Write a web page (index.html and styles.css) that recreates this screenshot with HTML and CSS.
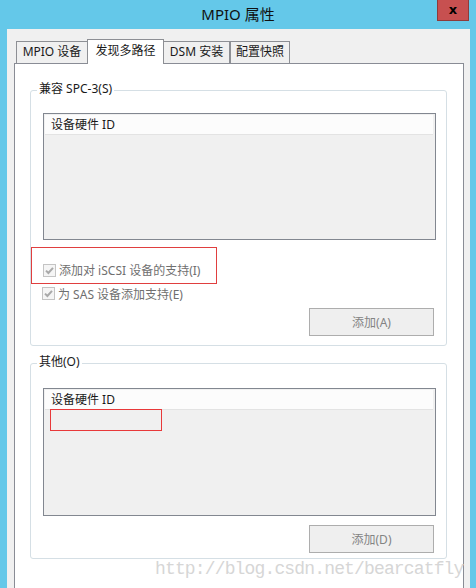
FILE: index.html
```html
<!DOCTYPE html>
<html lang="zh-CN">
<head>
    <meta charset="UTF-8">
    <meta name="viewport" content="width=device-width, initial-scale=1.0">
    <title>MPIO 属性</title>
    <link rel="stylesheet" href="styles.css">
</head>
<body>
    <div class="titlebar">
        <span></span>
        <div class="title">MPIO 属性</div>
        <div class="close">x</div>
    </div>

    <div class="window">
        <div class="tabs">
            <div class="tab tab-mpio">MPIO 设备</div>
            <div class="tab tab-active">发现多路径</div>
            <div class="tab tab-dsm">DSM 安装</div>
            <div class="tab tab-snap">配置快照</div>
        </div>

        <div class="page">
            <div class="group group-spc">
                <span class="group-title">兼容 SPC-3(S)</span>
                <div class="listbox list-spc">
                    <div class="list-header">设备硬件 ID</div>
                </div>
                <div class="check-row marked">
                    <svg width="13" height="13" viewBox="0 0 13 13"><rect x="0.5" y="0.5" width="12" height="12" fill="#f5f5f5" stroke="#c4c4c4"/><path d="M3 6.6 L5.4 9 L10 3.8" fill="none" stroke="#a9a9a9" stroke-width="2"/></svg>
                    <span>添加对 iSCSI 设备的支持(I)</span>
                </div>
                <div class="check-row plain">
                    <svg width="13" height="13" viewBox="0 0 13 13"><rect x="0.5" y="0.5" width="12" height="12" fill="#f5f5f5" stroke="#c4c4c4"/><path d="M3 6.6 L5.4 9 L10 3.8" fill="none" stroke="#a9a9a9" stroke-width="2"/></svg>
                    <span>为 SAS 设备添加支持(E)</span>
                </div>
                <button class="btn btn-spc">添加(A)</button>
            </div>

            <div class="group group-other">
                <span class="group-title">其他(O)</span>
                <div class="listbox list-other">
                    <div class="list-header">设备硬件 ID</div>
                    <div class="mark-box"></div>
                </div>
                <button class="btn btn-other">添加(D)</button>
            </div>
        </div>
    </div>

    <div class="watermark">http://blog.csdn.net/bearcatfly</div>
</body>
</html>
```

FILE: styles.css
```css
body { margin: 0; width: 476px; height: 588px; overflow: hidden; position: relative; background: #64c8e9; font-family: "Noto Sans", "Noto Sans CJK SC", sans-serif; font-size: 12px; color: #1a1a1a; }

.titlebar { height: 29px; display: grid; grid-template-columns: 1fr auto 1fr; }
.title { line-height: 29px; font-size: 15px; color: #111; }
.close { justify-self: end; align-self: start; width: 30px; height: 20px; margin-right: 7px; background: #c75050; border: 1px solid #8e3b3b; border-top: none; text-align: center; font-family: "DejaVu Sans", sans-serif; font-weight: bold; font-size: 13px; line-height: 19px; color: #000; }

.window { height: 559px; margin: 0 6px 0 7px; padding: 10px 7px 0 7px; box-sizing: border-box; background: #f0f0f0; }

.tabs { display: flex; align-items: flex-end; height: 24px; padding-left: 2px; }
.tab { box-sizing: border-box; height: 22px; border: 1px solid #8d8f94; border-bottom: none; background: #f0f0f0; text-align: center; line-height: 20px; white-space: nowrap; }
.tab-mpio { width: 72px; }
.tab-active { width: 77px; height: 25px; margin-left: -1px; margin-bottom: -1px; position: relative; z-index: 1; background: #fff; line-height: 21px; padding-bottom: 2px; }
.tab-dsm { width: 67px; margin-left: -1px; }
.tab-snap { width: 60px; }

.page { width: 450px; height: 540px; box-sizing: border-box; border: 1px solid #898c95; background: #fff; padding-top: 26px; }

.group { position: relative; box-sizing: border-box; width: 417px; margin-left: 15px; border: 1px solid #d5dfe5; border-radius: 3px; }
.group-spc { height: 256px; }
.group-other { height: 196px; margin-top: 17px; }
.group-title { position: absolute; top: -10px; left: 6px; padding: 0 2px; background: #fff; line-height: 16px; }

.listbox { box-sizing: border-box; width: 393px; margin-left: 12px; border: 1px solid #828790; background: #f0f0f0; padding: 1px 2px 0 1px; }
.list-spc { height: 127px; margin-top: 22px; }
.list-other { height: 128px; margin-top: 24px; }
.list-header { height: 19px; line-height: 19px; padding-left: 6px; background: #fcfcfc; border-bottom: 1px solid #e3e3e3; }
.mark-box { box-sizing: border-box; width: 112px; height: 22px; margin: -1px 0 0 5px; border: 1px solid #e8393a; }

.check-row { display: flex; align-items: center; height: 13px; color: #6f6f6f; }
.check-row svg { flex: none; margin-right: 3px; }
.marked { box-sizing: border-box; width: 186px; height: 37px; margin-top: 7px; padding: 9px 0 0 11px; border: 1px solid #e03f3f; align-items: center; }
.plain { margin-top: 3px; padding-left: 11px; }

.btn { display: block; box-sizing: border-box; width: 125px; height: 28px; margin-left: 278px; border: 1px solid #adadad; background: #efefef; color: #838383; font-family: inherit; font-size: 12px; padding: 0; }
.btn-spc { margin-top: 8px; }
.btn-other { margin-top: 9px; }

.watermark { position: absolute; left: 155px; top: 560px; font-family: "Liberation Mono", monospace; font-size: 18px; line-height: 18px; letter-spacing: -0.85px; color: #d6d6d6; white-space: nowrap; }
```
